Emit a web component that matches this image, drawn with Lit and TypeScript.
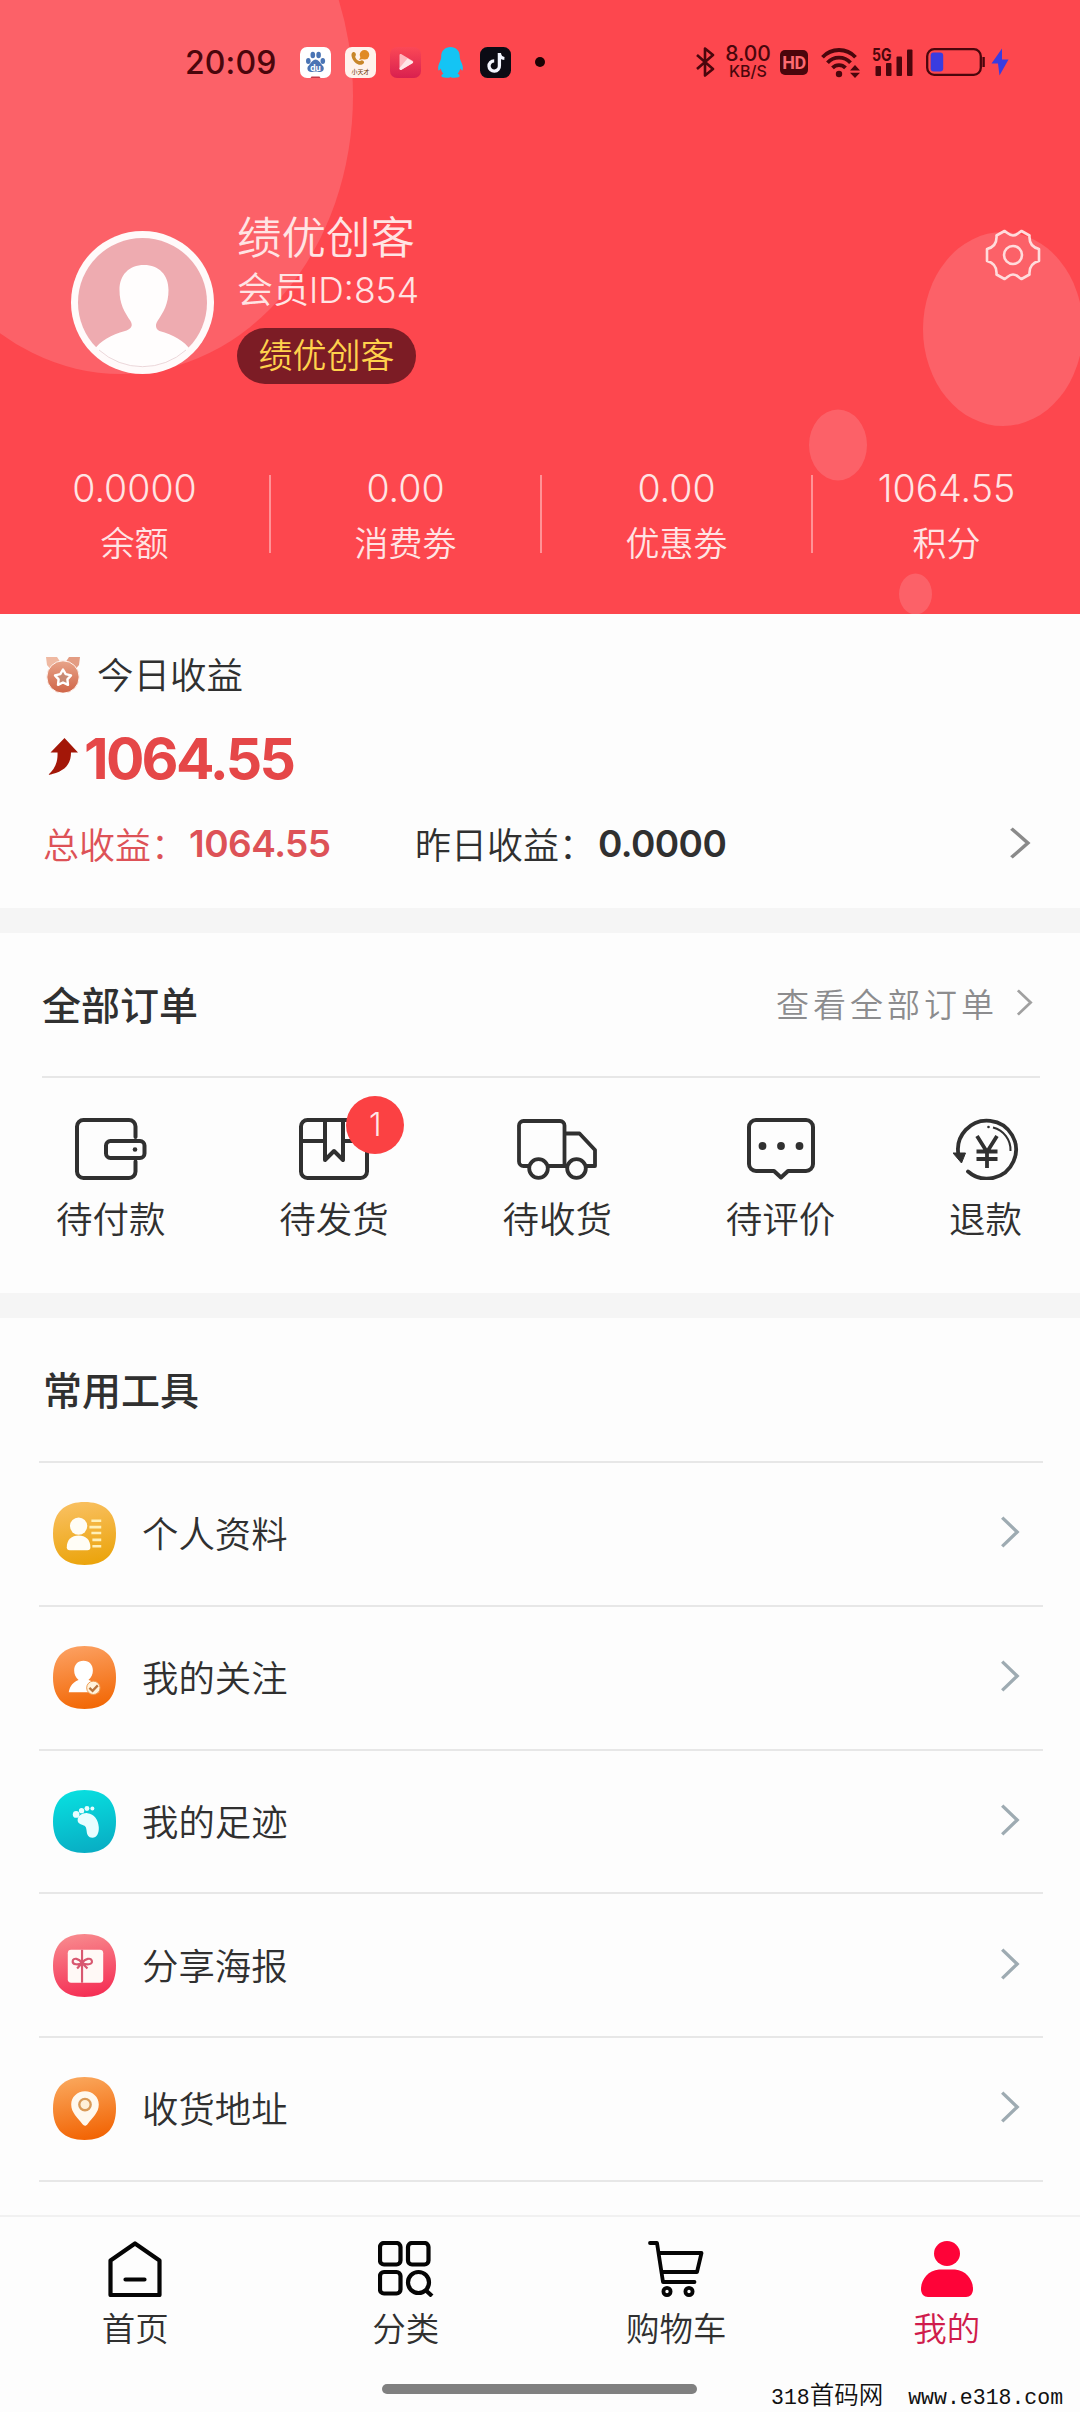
import { LitElement, html, svg, css } from "lit";
import { customElement } from "lit/decorators.js";

const statusIcons = {
  baidu: html`<svg width="31" height="31" viewBox="0 0 31 31">
    <rect width="31" height="31" rx="7" fill="#fff" />
    <g fill="#4a74b4">
      <ellipse cx="8.3" cy="14" rx="2.3" ry="3" />
      <ellipse cx="12.8" cy="8" rx="2.3" ry="3.2" />
      <ellipse cx="18.6" cy="8" rx="2.3" ry="3.2" />
      <ellipse cx="22.8" cy="14" rx="2.3" ry="3" />
      <path d="M15.6 12.5c2.6 0 3.8 2.4 5.6 4.4 1.800 2 3 3.200 2.500 5.400-.5 2.300-2.600 3-4.800 2.600-2.200-.4-4.400-.4-6.600 0-2.200.4-4.300-.3-4.800-2.600-.5-2.200.7-3.400 2.500-5.400 1.800-2 3-4.400 5.600-4.400z" />
    </g>
    <text x="15.6" y="23.500" font-size="8.500" font-weight="700" text-anchor="middle" fill="#fff">du</text>
    <path d="M10.500 31l1-1.600h8l1 1.600z" fill="#c33a48" />
  </svg>`,
  xtc: html`<svg width="31" height="31" viewBox="0 0 31 31">
    <rect width="31" height="31" rx="7" fill="#fff2ec" />
    <path d="M7.500 5.500c1.700-1.200 3.300.3 3.400 2 .1 1.300-1 1.700-.6 2.800.6 1.800 2.300 3.400 4 3.700 1.100.2 1.400-1 2.700-.8 1.700.2 2.800 1.900 1.600 3.200-2.200 2.400-6.200 1.500-9-1.500-2.600-2.700-4.300-7.600-2.100-9.400z" fill="#c8862a" />
    <circle cx="19.500" cy="7.800" r="4.800" fill="#e08a24" />
    <path d="M15.500 10l-1.500 3 4-1z" fill="#e08a24" />
    <text x="15.500" y="27" font-size="6" font-weight="500" text-anchor="middle" fill="#7a4a20">小天才</text>
  </svg>`,
  play: html`<svg width="31" height="31" viewBox="0 0 31 31">
    <defs><linearGradient id="pg" x1="0" y1="0" x2="0" y2="1"><stop offset="0" stop-color="#fb4856" /><stop offset="1" stop-color="#d9204f" /></linearGradient></defs>
    <rect width="31" height="31" rx="7" fill="url(#pg)" />
    <path d="M9.500 8.300c0-1.200 1-1.700 2-1.100l11 6.600c1 .6 1 1.700 0 2.300l-11 6.600c-1 .6-2 .1-2-1.100z" fill="#ffb4bc" />
    <path d="M9.500 21l8-9.500 5 3c.8.6.8 1.200 0 1.700l-11 6.500c-1 .6-2 .1-2-1.100z" fill="#ffe6e8" />
  </svg>`,
  qq: html`<svg width="31" height="31" viewBox="-2.500 0 31 31">
    <path d="M13 0c5.600 0 9.300 4 9.300 9.300 0 1.700.2 3 1 4.700 1.200 2.500 2.500 5.500 2 8.500-.3 1.600-1.300 1-2.600-.9-.3 2-1.200 3.800-2.600 5.200 1.600.7 2 1.400 2 2.300 0 1.300-2 1.700-4.600 1.700-2 0-3.600-.3-4.500-.9-.9.600-2.500.9-4.500.9-2.600 0-4.600-.4-4.600-1.700 0-.9.400-1.600 2-2.300-1.400-1.400-2.300-3.200-2.600-5.200-1.300 1.900-2.300 2.500-2.600.9-.5-3 .8-6 2-8.500.8-1.700 1-3 1-4.700C3.700 4 7.400 0 13 0z" fill="#14c4f4" />
  </svg>`,
  tiktok: html`<svg width="31" height="31" viewBox="0 0 31 31">
    <rect width="31" height="31" rx="7.500" fill="#0b0b14" />
    <path d="M19.400 6v12.600a5.200 5.200 0 1 1-5.200-4.800" fill="none" stroke="#f4f6ff" stroke-width="3.300" />
    <path d="M19.400 6.500c.5 3 2.400 4.800 5 5" fill="none" stroke="#f4f6ff" stroke-width="3.200" />
  </svg>`,
  bluetooth: html`<svg width="19" height="30" viewBox="0 0 19 30" fill="none" stroke="#4a060c" stroke-width="2.600" stroke-linejoin="round">
    <path d="M1 8l16 14-8 6.500v-27l8 6.500-16 14" />
  </svg>`,
  wifi: html`<svg width="39" height="31" viewBox="0 0 39 31" fill="none" stroke="#4a060c" stroke-width="3.800">
    <path d="M1.500 10.200a22.500 22.500 0 0 1 33 0M6.500 15.700a15.500 15.500 0 0 1 23 0M11.500 20.900a9 9 0 0 1 13 0" />
    <circle cx="18" cy="27" r="3.200" fill="#4a060c" stroke="none" />
    <path d="M29 23.500l5-5.500 5 5.500zM29 25.700l5 5.300 5-5.300z" fill="#4a060c" stroke="none" />
  </svg>`,
  signal: html`<svg class="sigsvg" width="42" height="30" viewBox="0 0 42 30" fill="#4a060c">
    <rect x="3.500" y="19" width="5.500" height="10" rx="1" />
    <rect x="14" y="16" width="5.500" height="13" rx="1" />
    <rect x="24.500" y="9.500" width="5.500" height="19.500" rx="1" />
    <rect x="35" y="2.500" width="5.500" height="26.500" rx="1" />
    <text x="0" y="13.500" font-size="17" font-weight="700" textLength="19.500" lengthAdjust="spacingAndGlyphs">5G</text>
  </svg>`,
  battery: html`<svg width="60" height="28" viewBox="0 0 60 28">
    <rect x="1.200" y="1.200" width="53.600" height="25.600" rx="7" fill="none" stroke="#4a060c" stroke-width="2.300" />
    <rect x="4.700" y="4.500" width="12.500" height="19" rx="3" fill="#3a3ce0" />
    <path d="M57.600 9v10" stroke="#4a060c" stroke-width="2.400" />
  </svg>`,
  bolt: html`<svg width="18" height="28" viewBox="0 0 18 28"><path d="M11 0.500L0.500 15.500h6.500L8.500 27.500 17.500 11.500h-6.500z" fill="#3a3ce0" /></svg>`,
};

const gearIcon = html`<svg width="56" height="54" viewBox="-28 -27 56 54" fill="none" stroke="#ffdcdc" stroke-width="2.600" stroke-linejoin="round">
  <path d="M-8.500-24C-5-22-4-19.500 0-19.500S5-22 8.500-24L16.500-19.500C16-13 18-8 26-6V6C18 8 16 13 16.500 19.500L8.500 24C5 22 4 19.500 0 19.500S-5 22-8.500 24L-16.500 19.500C-16 13-18 8-26 6V-6C-18-8-16-13-16.500-19.500Z" />
  <circle r="9" />
</svg>`;

const avatarIcon = html`<svg width="143" height="143" viewBox="0 0 143 143">
  <defs><clipPath id="ac"><circle cx="71.500" cy="71.500" r="65" /></clipPath></defs>
  <circle cx="71.500" cy="71.500" r="71.500" fill="#fffafa" />
  <circle cx="71.500" cy="71.500" r="64.500" fill="#eeabb0" />
  <path clip-path="url(#ac)" d="M73 34c15 0 24.500 10 24.500 25 0 14-5 22-11 31-2.500 4-2 8 2 10 14 4 24 9 32 20v30H22v-30c8-11 18-16 32-20 7-2 8-6 5.500-10-6-9-11-17-11-31 0-15 9.500-25 24.500-25z" fill="#fffdfd" />
  <path d="M28 119a65 65 0 0 0 87 0" fill="none" stroke="#e6cdd0" stroke-width="0.800" />
</svg>`;

const medalIcon = html`<svg width="36" height="37" viewBox="0 0 36 37">
  <defs><linearGradient id="mg" x1="0" y1="0" x2="0" y2="1"><stop offset="0" stop-color="#e8a489" /><stop offset="1" stop-color="#cf6447" /></linearGradient></defs>
  <path d="M1 1h11l4 6-9 8-5-6z" fill="#efb9a2" /><path d="M35 1H24l-4 6 9 8 5-6z" fill="#e39c82" />
  <circle cx="18" cy="21" r="16.200" fill="url(#mg)" stroke="#fff3ee" stroke-width="1" />
  <path d="M18 13.500l2.700 4.700 5.300 1.200-3.600 4 .6 5.400-5-2.300-5 2.300.6-5.400-3.600-4 5.300-1.200z" fill="#c98a74" stroke="#fff" stroke-width="2.400" stroke-linejoin="round" />
</svg>`;

const riseIcon = html`<svg width="30" height="37" viewBox="0 0 30 37">
  <path d="M16.500 0L30 14.500h-7C23 26 17 34 0 37c7-6 10-13 9.500-22.500H2.500z" fill="#a31708" />
</svg>`;

const chevron = (w: number, h: number, color: string, sw: number) => html`<svg class="chev" width=${w} height=${h} viewBox="0 0 18 30" preserveAspectRatio="none" fill="none" stroke=${color} stroke-width=${sw}>
  <path d="M2 1.500L15.500 15 2 28.500" />
</svg>`;

const orderIcons = [
  html`<svg width="72" height="62" viewBox="0 0 72 62" fill="none" stroke="#303030" stroke-width="4" stroke-linecap="round">
    <path d="M60.500 19V8.500a6.500 6.500 0 0 0-6.500-6.500H8.500A6.500 6.500 0 0 0 2 8.500v45A6.500 6.500 0 0 0 8.500 60H54a6.500 6.500 0 0 0 6.500-6.500V43.500" />
    <rect x="31" y="23" width="38.500" height="17" rx="4.500" /><circle cx="60" cy="31.500" r="2.300" fill="#303030" stroke="none" />
  </svg>`,
  html`<svg width="70" height="62" viewBox="0 0 70 62" fill="none" stroke="#303030" stroke-width="4" stroke-linejoin="round">
    <rect x="2" y="2" width="66" height="58" rx="6.500" /><path d="M2 23h24M44 23h24M26 2v40l9-9 9 9V2" />
  </svg>`,
  html`<svg width="80" height="62" viewBox="0 0 80 62" fill="none" stroke="#303030" stroke-width="3.800" stroke-linejoin="round">
    <path d="M12 48H6.500A4.500 4.500 0 0 1 2 43.500v-36A4.500 4.500 0 0 1 6.500 3H43a4.500 4.500 0 0 1 4.500 4.500V48H31M47.500 15.500h15L78 32v16h-8.500M47.500 48h3" />
    <circle cx="21.500" cy="50.500" r="9.300" /><circle cx="59.500" cy="50.500" r="9.300" />
  </svg>`,
  html`<svg width="68" height="62" viewBox="0 0 68 62" fill="none" stroke="#303030" stroke-width="4" stroke-linejoin="round">
    <path d="M9 2h50a7 7 0 0 1 7 7v37a7 7 0 0 1-7 7H41l-7 6.500L27 53H9a7 7 0 0 1-7-7V9a7 7 0 0 1 7-7z" />
    <g fill="#303030" stroke="none"><circle cx="15.500" cy="28" r="3.900" /><circle cx="34" cy="28" r="3.900" /><circle cx="52.500" cy="28" r="3.900" /></g>
  </svg>`,
  html`<svg width="66" height="62" viewBox="0 0 66 62" fill="none" stroke="#303030" stroke-width="3.800">
    <path d="M5.500 37A29 29 0 1 1 15 53.500" stroke-linecap="round" /><path d="M0 35h12.500l-4 10z" fill="#303030" stroke-width="1" />
    <path d="M24 18l10 16 10-16M34 34v16M23.500 33.500h21M23.500 41h21" /><path d="M40 9.500A23 23 0 0 1 57.500 33" stroke-width="2" /><circle cx="35.500" cy="9" r="1.300" fill="#303030" stroke="none" />
  </svg>`,
];

const tile = (id: string, from: string, to: string, body: unknown) => html`<svg width="63" height="63" viewBox="0 0 64 64">
  <defs><linearGradient id=${id} x1="0.3" y1="0" x2="0.5" y2="1"><stop offset="0" stop-color=${from} /><stop offset="1" stop-color=${to} /></linearGradient></defs>
  <path d="M32 0C53 0 64 11 64 32S53 64 32 64 0 53 0 32 11 0 32 0Z" fill="url(#${id})" />${body}
</svg>`;

const tools = [
  { label: "个人资料", icon: tile("t1", "#f9c061", "#eba40c", svg`
    <circle cx="26" cy="24.500" r="8.800" fill="#fffdf6"/><path d="M14 46c0-8 5-12 12-12s12 4 12 12c0 2-1 3-3 3H17c-2 0-3-1-3-3z" fill="#fffdf6"/>
    <path d="M39 19h10M37 25.500h12M39 31.500h10M40 38.500h9M40 45h9" stroke="#fff0b8" stroke-width="2.600"/>`) },
  { label: "我的关注", icon: tile("t2", "#fca061", "#f26806", svg`
    <path d="M31 15c6 0 9.500 4 9.500 10 0 4-1.500 7-4.500 9.500 6 2 10 5 11 12.500H16c1-7 5-10.500 10-12.500-3-2.500-4.500-5.500-4.500-9.500 0-6 3.500-10 9.500-10z" fill="#fff"/>
    <circle cx="41" cy="42.500" r="6.800" fill="#fff3dc" stroke="#ee9a50" stroke-width="1"/><path d="M37 42.500l3.200 3 5.300-5.500" fill="none" stroke="#b8743c" stroke-width="2.300"/>`) },
  { label: "我的足迹", icon: tile("t3", "#08dfe0", "#08aec4", svg`
    <g fill="#e8feff"><circle cx="23.500" cy="24.800" r="3.400"/><circle cx="29" cy="21" r="2.700"/><circle cx="34.500" cy="18.800" r="2.500"/><circle cx="40" cy="18.800" r="2"/>
    <path d="M25 31c0-5 5-8 10-7.500 7 .5 11 7 11.500 14 .4 6-2 11-6.500 11-4 0-5.500-3-5.800-6.500-.3-4-.9-5.500-4-6.500-3-.9-5.200-2-5.200-4.500z"/></g>`) },
  { label: "分享海报", icon: tile("t4", "#f88a8e", "#f52f55", svg`
    <rect x="15" y="16" width="36" height="33.500" rx="3.500" fill="#fff9f6"/><path d="M29.500 16v33.500" stroke="#d85870" stroke-width="2.200"/>
    <path d="M29.500 29.500c-3-4.500-9-6-9.500-2s6 4 9.500 2c3-4.500 9-6 10-2s-6 4-10 2zM29.500 29.500l-5 5.500M29.500 29.500l5.500 5.500" fill="none" stroke="#d85870" stroke-width="2.200"/>`) },
  { label: "收货地址", icon: tile("t5", "#faa75c", "#f26404", svg`
    <path d="M32.500 14.500c8 0 14 6 14 13.500 0 8.500-6.500 13-11.500 20-1.500 2-3.500 2-5 0-5-7-11.500-11.500-11.500-20 0-7.500 6-13.500 14-13.500z" fill="#fff8ee"/>
    <circle cx="32.500" cy="28" r="5.800" fill="#fff0d8" stroke="#d99a58" stroke-width="2.400"/>`) },
];

const navIcons = [
  html`<svg width="54" height="56" viewBox="0 0 54 56" fill="none" stroke="#050505" stroke-width="4.200" stroke-linejoin="round" stroke-linecap="round">
    <path d="M27 2.500L51.500 19.500v34.500h-49V19.500zM17.500 38.500h19" />
  </svg>`,
  html`<svg width="56" height="56" viewBox="0 0 56 56" fill="none" stroke="#050505" stroke-width="4.200">
    <rect x="2" y="2" width="20.500" height="21.500" rx="4" /><rect x="30" y="2" width="20.500" height="21.500" rx="4" /><rect x="2" y="31" width="20.500" height="21.500" rx="4" />
    <circle cx="40.500" cy="41.500" r="10.500" /><path d="M47.500 49l6.500 6" />
  </svg>`,
  html`<svg width="56" height="56" viewBox="0 0 56 56" fill="none" stroke="#050505" stroke-width="3.800" stroke-linecap="round" stroke-linejoin="round">
    <path d="M2 2h7l6 39h31.500M10.500 12H53.500L49 31H14" /><circle cx="19" cy="50.500" r="3.600" /><circle cx="41" cy="50.500" r="3.600" />
  </svg>`,
  html`<svg width="52" height="56" viewBox="0 0 52 56" fill="#fe0338">
    <ellipse cx="26" cy="12.500" rx="13" ry="12.500" /><path d="M18 28.500h16c11 1 18 10 18 19.500 0 5-3 8-7 8H7c-4 0-7-3-7-8 0-9.500 7-18.500 18-19.500z" />
  </svg>`,
];

const stats = [["0.0000", "余额"], ["0.00", "消费劵"], ["0.00", "优惠劵"], ["1064.55", "积分"]];
const orders = ["待付款", "待发货", "待收货", "待评价", "退款"];
const navs = ["首页", "分类", "购物车", "我的"];

@customElement("app-root")
export class AppRoot extends LitElement {
  static styles = css`
    :host { display: block; width: 1080px; height: 2412px; overflow: hidden; position: relative; background: #fdfdfd; color: #303030;
      font-family: Inter, "Noto Sans CJK SC", sans-serif; font-weight: 400; white-space: nowrap; }
    * { box-sizing: border-box; }
    svg { display: block; flex: none; }
    .sigsvg { overflow: visible; }
    .hero { position: relative; height: 614px; background: #fd474e; color: #ffe4e4; overflow: hidden; }
    .bubbles { position: absolute; inset: 0; }
    .status { position: relative; height: 124px; padding: 0 71px 0 185px; display: flex; align-items: center; color: #4a060c; }
    .time { font-size: 32px; font-weight: 500; width: 115px; letter-spacing: 0.1px; }
    .apps { display: flex; gap: 14px; align-items: center; flex: 1; }
    .dot { width: 10px; height: 10px; border-radius: 50%; background: #1c0204; margin-left: 10px; }
    .sys { display: flex; align-items: center; }
    .speed { width: 46px; margin-left: 10px; text-align: center; font-weight: 500; line-height: 16px; font-size: 21px; padding-top: 1px; }
    .speed small { display: block; font-size: 16px; line-height: 15px; padding-top: 2px; }
    .hd { width: 28px; height: 25px; border-radius: 5px; background: #4a060c; color: #fd6a70; font: 700 18px/26px Roboto, sans-serif; text-align: center; margin: 0 13px 0 9px; letter-spacing: -0.5px; }
    .sig { margin-left: 12px; } .bat { margin-left: 12px; } .bolt { margin-left: 5px; }
    .profile { position: relative; height: 351px; padding: 107px 39px 0 71px; display: flex; align-items: flex-start; }
    .who { flex: 1; padding-left: 23px; margin-top: -22px; display: flex; flex-direction: column; align-items: flex-start; font-weight: 350; }
    .name { font-size: 44.500px; line-height: 58px; }
    .mid { font-size: 36px; line-height: 46px; }
    .mid span { font-size: 35.500px; }
    .pill { margin-top: 14px; width: 179px; height: 56px; border-radius: 28px; background: #7c1c25; color: #ffd24c; font-size: 34px; line-height: 55px; text-align: center; font-weight: 350; }
    .gear { margin-top: -3px; }
    .stats { position: relative; display: grid; grid-template-columns: 271px 271px 271px 267px; grid-template-rows: 78px; height: 78px; }
    .stat { border-right: 2px solid #ff9296; text-align: center; font-weight: 350; }
    .stat:last-child { border: 0; }
    .num { font-size: 37.500px; line-height: 28px; height: 28px; }
    .lab { font-size: 34px; line-height: 46px; margin-top: 18px; }
    .income { height: 294px; padding: 34px 0 0 45px; }
    .row { display: flex; align-items: center; }
    .today { height: 50px; font-size: 36.500px; gap: 16px; font-weight: 350; }
    .today svg { margin-top: 3px; }
    .big { height: 76px; margin-top: 22px; padding-left: 3px; gap: 6px; color: #e54748; font-size: 57px; font-weight: 700; letter-spacing: -2.700px; }
    .big svg { margin-top: -4px; }
    .sum { height: 50px; margin: 22px 0 0 -2px; font-size: 36px; padding-right: 49px; font-weight: 350; }
    .sum b { font-weight: 600; font-size: 37px; letter-spacing: -0.500px; }
    .total { color: #dd5257; width: 372px; display: flex; align-items: center; } .total b { margin-left: 2px; }
    .yest { flex: 1; display: flex; align-items: center; } .yest b { margin-left: 3px; letter-spacing: -0.600px; }
    .gap { height: 25px; background: #f5f5f5; }
    .orders { height: 360px; }
    .title { height: 145px; margin: 0 40px 0 42px; border-bottom: 2px solid #e7e7e7; display: flex; align-items: center; justify-content: space-between; font-size: 39px; font-weight: 500; padding-bottom: 4px; }
    .more { display: flex; align-items: center; font-size: 33px; letter-spacing: 4px; color: #8c8c8e; font-weight: 350; gap: 18px; padding-right: 7px; }
    .items { display: flex; justify-content: space-between; padding: 40px 58px 0 56px; }
    .item { position: relative; display: flex; flex-direction: column; align-items: center; font-size: 36.500px; line-height: 50px; gap: 15px; font-weight: 350; }
    .badge { position: absolute; left: 67px; top: -22px; width: 58px; height: 58px; border-radius: 50%; background: #fb4143; color: #ffe6e6; font-size: 32px; line-height: 58px; text-align: center; font-weight: 350; }
    .tools .title { margin: 0 37px 0 39px; padding-left: 4px; }
    .tool { height: 143.750px; margin: 0 37px 0 39px; padding: 0 23px 0 14px; border-bottom: 2px solid #e7e7e7; display: flex; align-items: center; font-size: 36.400px; font-weight: 350; }
    .tool span { flex: 1; padding: 0 0 3px 26px; }
    .tool .chev { margin-top: -3px; }
    .spacer { height: 33px; }
    .nav { height: 198px; border-top: 2px solid #f1f1f1; display: grid; grid-template-columns: repeat(4, 270.500px); padding-top: 24px; }
    .nav div { display: flex; flex-direction: column; align-items: center; gap: 8px; font-size: 33.500px; line-height: 48px; font-weight: 350; }
    .nav div:last-child { color: #d01c4c; }
    .handle { position: absolute; left: 382px; top: 2384px; width: 315px; height: 10px; border-radius: 5px; background: #808080; }
    .mark { position: absolute; left: 771px; top: 2385px; height: 27px; color: #111; font: 400 21.500px/27px "Liberation Mono", "Noto Sans CJK SC", monospace; white-space: pre; display: flex; }
    .mark i { font-style: normal; font-size: 24.500px; font-weight: 350; line-height: 26px; } .mark u { text-decoration: none; margin-left: 25px; }
  `;

  render() {
    return html`
      <header class="hero">
        <svg class="bubbles" width="1080" height="614" fill="#fc6168">
          <ellipse cx="121" cy="96" rx="232" ry="278" /><ellipse cx="1003" cy="329" rx="80" ry="97" />
          <ellipse cx="838" cy="445" rx="29" ry="35.500" /><ellipse cx="915.500" cy="594" rx="16.500" ry="20.500" />
        </svg>
        <div class="status">
          <div class="time">20:09</div>
          <div class="apps">${statusIcons.baidu}${statusIcons.xtc}${statusIcons.play}${statusIcons.qq}${statusIcons.tiktok}<div class="dot"></div></div>
          <div class="sys">
            ${statusIcons.bluetooth}<div class="speed">8.00<small>KB/S</small></div><div class="hd">HD</div>
            ${statusIcons.wifi}<div class="sig">${statusIcons.signal}</div><div class="bat">${statusIcons.battery}</div><div class="bolt">${statusIcons.bolt}</div>
          </div>
        </div>
        <div class="profile">
          ${avatarIcon}
          <div class="who"><div class="name">绩优创客</div><div class="mid">会员<span>ID:854</span></div><div class="pill">绩优创客</div></div>
          <div class="gear">${gearIcon}</div>
        </div>
        <div class="stats">${stats.map(([n, l]) => html`<div class="stat"><div class="num">${n}</div><div class="lab">${l}</div></div>`)}</div>
      </header>
      <section class="income">
        <div class="row today">${medalIcon}<span>今日收益</span></div>
        <div class="row big">${riseIcon}<span>1064.55</span></div>
        <div class="row sum"><div class="total">总收益：<b>1064.55</b></div><div class="yest">昨日收益：<b>0.0000</b></div>${chevron(22, 32, "#8a8a8a", 3)}</div>
      </section>
      <div class="gap"></div>
      <section class="orders">
        <div class="title"><span>全部订单</span><div class="more">查看全部订单 ${chevron(17, 27, "#a0a0a0", 3)}</div></div>
        <div class="items">${orders.map((o, i) => html`<div class="item">${orderIcons[i]}<span>${o}</span>${i === 1 ? html`<div class="badge">1</div>` : ""}</div>`)}</div>
      </section>
      <div class="gap"></div>
      <section class="tools">
        <div class="title"><span>常用工具</span></div>
        ${tools.map((t) => html`<div class="tool">${t.icon}<span>${t.label}</span>${chevron(20, 32, "#9eabb2", 3)}</div>`)}
      </section>
      <div class="spacer"></div>
      <nav class="nav">${navs.map((n, i) => html`<div>${navIcons[i]}<span>${n}</span></div>`)}</nav>
      <div class="handle"></div>
      <div class="mark">318<i>首码网</i><u>www.e318.com</u></div>
    `;
  }
}
